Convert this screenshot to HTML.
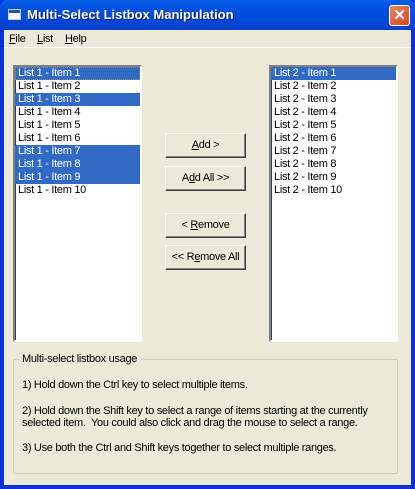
<!DOCTYPE html>
<html><head><style>
*{margin:0;padding:0;box-sizing:border-box}
body{width:415px;height:489px;overflow:hidden;background:#0831d9;font-family:"Liberation Sans",sans-serif;font-size:11px;letter-spacing:-0.3px;position:relative}
.title{position:absolute;left:0;top:0;width:415px;height:30px;background:linear-gradient(#0a5fe6,#0054e3 20%,#0348d8 70%,#0640c9);border-radius:7px 7px 0 0}
.title span{position:absolute;left:27px;top:7px;color:#fff;font-weight:bold;font-size:13px;letter-spacing:0;text-shadow:1px 1px #0a1e6e}
.ico{position:absolute;left:8px;top:9px;width:13px;height:11px;background:#fff;border:1px solid #ccc}
.ico:after{content:"";position:absolute;left:0;top:0;width:11px;height:3px;background:#2a4fb8}
.close{position:absolute;left:389px;top:5px;width:21px;height:21px;background:linear-gradient(135deg,#e9876a,#d9441c);border:1px solid #fff;border-radius:3px;color:#fff;font-weight:bold;font-size:15px;text-align:center;line-height:19px}
.client{position:absolute;left:4px;top:30px;width:407px;height:455px;background:#ece9d8}
.menu{position:absolute;left:4px;top:30px;width:407px;height:18px;border-bottom:1px solid #fff}
.menu span{position:absolute;top:3px}
.list{position:absolute;top:65px;width:129px;height:277px;background:#fff;border:2px solid;border-color:#808080 #fff #fff #808080;box-shadow:inset 1px 1px #404040}
.list div{height:13px;line-height:13px;padding-left:3px;white-space:nowrap}
.s{background:#316ac5;color:#fff}
.btn{position:absolute;left:165px;width:81px;height:25px;background:#ece9d8;border:1px solid;border-color:#fff #404040 #404040 #fff;box-shadow:inset -1px -1px #808080;text-align:center;line-height:22px}
.grp{position:absolute;left:13px;top:359px;width:385px;height:115px;border:1px solid #d0d0bf;border-radius:2px}
.grp .l{position:absolute;left:6px;top:-7px;background:#ece9d8;padding:0 3px 0 2px}
.grp p{position:absolute;left:8px}
</style></head><body>
<div class="title"><div class="ico"></div><span>Multi-Select Listbox Manipulation</span><div class="close">✕</div></div>
<div class="client"></div>
<div class="menu"><span style="left:5px"><u>F</u>ile</span><span style="left:33px"><u>L</u>ist</span><span style="left:61px"><u>H</u>elp</span></div>
<div class="list" style="left:13px"><div class="s" style="outline:1px dotted #888;outline-offset:-1px">List 1 - Item 1</div><div>List 1 - Item 2</div><div class="s">List 1 - Item 3</div><div>List 1 - Item 4</div><div>List 1 - Item 5</div><div>List 1 - Item 6</div><div class="s">List 1 - Item 7</div><div class="s">List 1 - Item 8</div><div class="s">List 1 - Item 9</div><div>List 1 - Item 10</div></div>
<div class="list" style="left:269px"><div class="s">List 2 - Item 1</div><div>List 2 - Item 2</div><div>List 2 - Item 3</div><div>List 2 - Item 4</div><div>List 2 - Item 5</div><div>List 2 - Item 6</div><div>List 2 - Item 7</div><div>List 2 - Item 8</div><div>List 2 - Item 9</div><div>List 2 - Item 10</div></div>
<div class="btn" style="top:133px"><u>A</u>dd &gt;</div>
<div class="btn" style="top:166px">A<u>d</u>d All &gt;&gt;</div>
<div class="btn" style="top:213px">&lt; <u>R</u>emove</div>
<div class="btn" style="top:245px">&lt;&lt; R<u>e</u>move All</div>
<div class="grp"><span class="l">Multi-select listbox usage</span>
<p style="top:19px">1) Hold down the Ctrl key to select multiple items.</p>
<p style="top:45px">2) Hold down the Shift key to select a range of items starting at the currently<br>selected item.&nbsp; You could also click and drag the mouse to select a range.</p>
<p style="top:82px">3) Use both the Ctrl and Shift keys together to select multiple ranges.</p></div>
</body></html>
